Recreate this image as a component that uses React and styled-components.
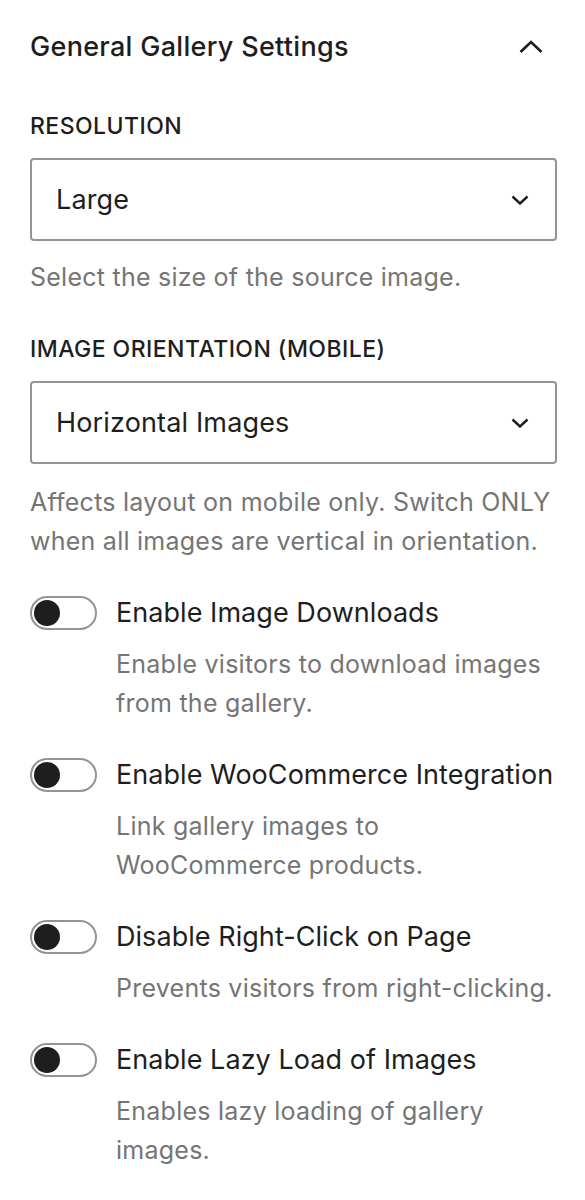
import React from "react";
import styled, { createGlobalStyle } from "styled-components";

const Global = createGlobalStyle`
  html, body { margin: 0; padding: 0; background: #ffffff; }
  body { font-family: Inter, "Noto Sans", "Liberation Sans", sans-serif; color: #1e1e1e; -webkit-font-smoothing: antialiased; }
`;

const Panel = styled.div`
  padding: 30px 28px 40px 30px;
  display: flex;
  flex-direction: column;
`;

const Header = styled.div`
  display: flex;
  align-items: center;
  justify-content: space-between;
  height: 34px;
  padding-right: 14px;
`;

const Title = styled.h2`
  margin: 0;
  font-size: 27px;
  line-height: 34px;
  font-weight: 500;
  letter-spacing: 0.3px;
  color: #1e1e1e;
`;

const Field = styled.div`
  display: flex;
  flex-direction: column;
  margin-top: ${(p) => p.$top}px;
`;

const Label = styled.div`
  font-size: 23px;
  line-height: 28px;
  font-weight: 500;
  letter-spacing: 0.45px;
  text-transform: uppercase;
  color: #1e1e1e;
`;

const SelectBox = styled.div`
  margin-top: 18px;
  height: 83px;
  box-sizing: border-box;
  border: 2px solid #949494;
  border-radius: 4px;
  display: flex;
  align-items: center;
  justify-content: space-between;
  padding: 0 26px 0 24px;
  font-size: 27px;
  letter-spacing: 0.15px;
  color: #1e1e1e;
`;

const Help = styled.p`
  margin: ${(p) => p.$top || 0}px 0 0 0;
  font-size: 25px;
  line-height: 39px;
  letter-spacing: 0.25px;
  color: #757575;
`;

const ToggleBlock = styled.div`
  display: flex;
  flex-direction: column;
  margin-top: 32px;
`;

const ToggleRow = styled.div`
  display: flex;
  align-items: center;
  height: 39px;
`;

const Track = styled.span`
  box-sizing: border-box;
  width: 67px;
  height: 34px;
  border: 2px solid #949494;
  border-radius: 17px;
  display: flex;
  align-items: center;
  padding-left: 2px;
  flex-shrink: 0;
`;

const Knob = styled.span`
  width: 26px;
  height: 26px;
  border-radius: 50%;
  background: #1e1e1e;
`;

const ToggleLabel = styled.span`
  margin-left: 19px;
  font-size: 27px;
  letter-spacing: 0.05px;
  color: #1e1e1e;
  white-space: nowrap;
`;

const ToggleHelp = styled(Help)`
  margin: 13px 0 0 86px;
`;

const ChevronUp = () => (
  <svg width="24" height="14" viewBox="0 0 24 14" fill="none">
    <path d="M1.5 12 L12 2 L22.5 12" stroke="#1e1e1e" strokeWidth="2.6" />
  </svg>
);

const ChevronDown = () => (
  <svg width="18" height="10" viewBox="0 0 18 10" fill="none">
    <path d="M1.5 1.5 L9 8.5 L16.5 1.5" stroke="#1e1e1e" strokeWidth="2.4" />
  </svg>
);

const toggles = [
  { label: "Enable Image Downloads", help: "Enable visitors to download images from the gallery." },
  { label: "Enable WooCommerce Integration", help: "Link gallery images to WooCommerce products." },
  { label: "Disable Right-Click on Page", help: "Prevents visitors from right-clicking." },
  { label: "Enable Lazy Load of Images", help: "Enables lazy loading of gallery images." },
];

export default function App() {
  return (
    <>
      <Global />
      <Panel>
        <Header>
          <Title>General Gallery Settings</Title>
          <ChevronUp />
        </Header>
        <Field $top={48}>
          <Label>Resolution</Label>
          <SelectBox>
            <span>Large</span>
            <ChevronDown />
          </SelectBox>
          <Help $top={17}>Select the size of the source image.</Help>
        </Field>
        <Field $top={38}>
          <Label>Image Orientation (Mobile)</Label>
          <SelectBox>
            <span>Horizontal Images</span>
            <ChevronDown />
          </SelectBox>
          <Help $top={19}>
            Affects layout on mobile only. Switch ONLY when all images are vertical in orientation.
          </Help>
        </Field>
        {toggles.map((t) => (
          <ToggleBlock key={t.label}>
            <ToggleRow>
              <Track>
                <Knob />
              </Track>
              <ToggleLabel>{t.label}</ToggleLabel>
            </ToggleRow>
            <ToggleHelp>{t.help}</ToggleHelp>
          </ToggleBlock>
        ))}
      </Panel>
    </>
  );
}
